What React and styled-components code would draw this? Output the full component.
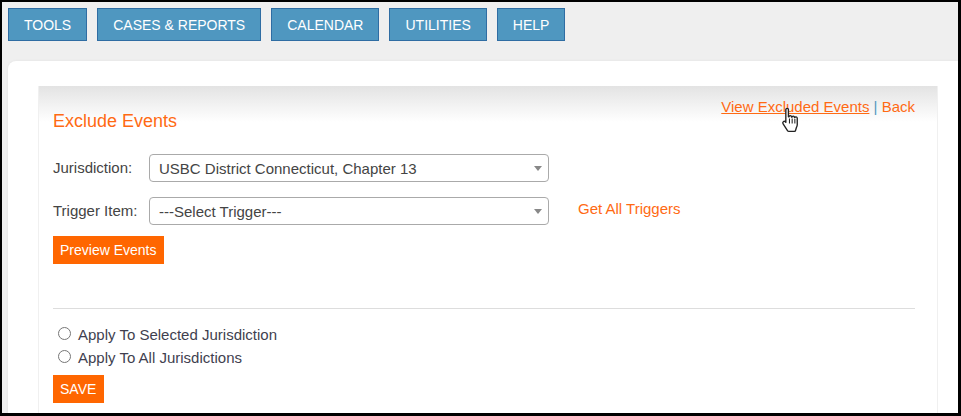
import React from "react"
import styled, { createGlobalStyle } from "styled-components"

const GlobalStyle = createGlobalStyle`
  * {
    box-sizing: border-box;
  }
  html, body {
    margin: 0;
    padding: 0;
    background: #000;
  }
`

const NAV_ITEMS = ["TOOLS", "CASES & REPORTS", "CALENDAR", "UTILITIES", "HELP"]

const Frame = styled.div`
  width: 961px;
  height: 416px;
  overflow: hidden;
  border: solid #000;
  border-width: 2px 3px 3px 2px;
  background: #efefef;
  font-family: "Liberation Sans", Arial, sans-serif;
  font-size: 15px;
  color: #444;
`

const Nav = styled.nav`
  display: flex;
  gap: 10px;
  padding: 6px 6px 0;
  height: 59px;
`

const NavButton = styled.a`
  height: 33px;
  padding: 0 15px;
  display: flex;
  align-items: center;
  background: #4f97c0;
  border: 1px solid #2f6da3;
  color: #fff;
  font-size: 14px;
`

const Page = styled.main`
  margin-left: 6px;
  height: 400px;
  padding: 25px 20px 0 30px;
  background: #fff;
  border-radius: 8px 0 0 0;
  box-shadow: 0 0 3px rgba(0, 0, 0, 0.06);
`

const Panel = styled.section`
  position: relative;
  width: 900px;
  height: 340px;
  padding: 0 22px 0 14px;
  background: linear-gradient(#e3e3e3, #fff 36px);
  border: solid #f0f0f0;
  border-width: 0 1px 0 1px;
`

const Links = styled.div`
  position: absolute;
  top: 12px;
  right: 22px;
  color: #4f97c0;
`

const OrangeLink = styled.a`
  color: #ff6a13;
  text-decoration: ${p => (p.$underline ? "underline" : "none")};
`

const Title = styled.h2`
  margin: 0;
  padding-top: 25px;
  height: 68px;
  font-size: 18px;
  font-weight: 400;
  line-height: 20px;
  color: #ff6a13;
`

const Row = styled.div`
  display: flex;
  align-items: center;
  height: 28px;
  margin-bottom: ${p => p.$gap}px;
`

const Label = styled.label`
  width: 96px;
  position: relative;
  top: -1px;
`

const Select = styled.div`
  position: relative;
  width: 400px;
  height: 28px;
  padding-left: 9px;
  display: flex;
  align-items: center;
  border: 1px solid #aaa;
  border-radius: 4px;
  background: #fff;
  &::after {
    content: "";
    position: absolute;
    right: 6px;
    top: 11px;
    border: solid transparent;
    border-width: 5px 4px 0;
    border-top-color: #888;
  }
`

const TriggerLink = styled(OrangeLink)`
  margin-left: 29px;
  position: relative;
  top: -3px;
`

const OrangeButton = styled.button`
  display: block;
  height: 28px;
  padding: 0 7px;
  width: ${p => p.$width}px;
  border: 0;
  background: #ff6600;
  color: #fff;
  font-family: inherit;
  font-size: 14px;
  text-align: left;
`

const Divider = styled.hr`
  margin: 44px 0 14px;
  border: 0;
  border-top: 1px solid #ddd;
`

const RadioRow = styled.label`
  display: flex;
  align-items: center;
  height: 23px;
  color: #3f3f4f;
`

const Radio = styled.input`
  width: 13px;
  height: 13px;
  margin: 0 7px 2px 5px;
`

const SaveButton = styled(OrangeButton)`
  margin-top: 6px;
`

const Cursor = styled.svg`
  position: absolute;
  left: 742px;
  top: 21px;
  width: 19px;
  height: 27px;
`

const HandCursor = () => (
  <Cursor viewBox="0 0 18 26">
    <path
      d="M4.5 2.5c0-1.6 2.5-1.6 2.5 0v7l.6 0c0-1.5 2.3-1.5 2.4 0l.4.3c.2-1.4 2.3-1.3 2.4.2l.4.3c.3-1.2 2.3-1 2.3.5v6.2c0 1.2-.4 2-.9 3l-.7 2.5c-.1.6-.5 1-1.2 1H7.4c-.6 0-1-.3-1.3-.8l-4.2-6.4c-1.2-1.8.9-3.3 2.2-2l.4.5z"
      fill="#fff"
      stroke="#222"
      strokeWidth="1.3"
      strokeLinejoin="round"
    />
    <path d="M8 11v5M10.6 11v5M13.2 11.5V16" stroke="#222" strokeWidth="1" fill="none" />
  </Cursor>
)

export default function App() {
  return (
    <Frame>
      <GlobalStyle />
      <Nav>
        {NAV_ITEMS.map(item => (
          <NavButton key={item}>{item}</NavButton>
        ))}
      </Nav>
      <Page>
        <Panel>
          <Links>
            <OrangeLink $underline>View Excluded Events</OrangeLink> | <OrangeLink>Back</OrangeLink>
          </Links>
          <HandCursor />
          <Title>Exclude Events</Title>
          <Row $gap={15}>
            <Label>Jurisdiction:</Label>
            <Select>USBC District Connecticut, Chapter 13</Select>
          </Row>
          <Row $gap={11}>
            <Label>Trigger Item:</Label>
            <Select>---Select Trigger---</Select>
            <TriggerLink>Get All Triggers</TriggerLink>
          </Row>
          <OrangeButton $width={111}>Preview Events</OrangeButton>
          <Divider />
          <RadioRow>
            <Radio type="radio" name="apply" />
            Apply To Selected Jurisdiction
          </RadioRow>
          <RadioRow>
            <Radio type="radio" name="apply" />
            Apply To All Jurisdictions
          </RadioRow>
          <SaveButton $width={51}>SAVE</SaveButton>
        </Panel>
      </Page>
    </Frame>
  )
}
